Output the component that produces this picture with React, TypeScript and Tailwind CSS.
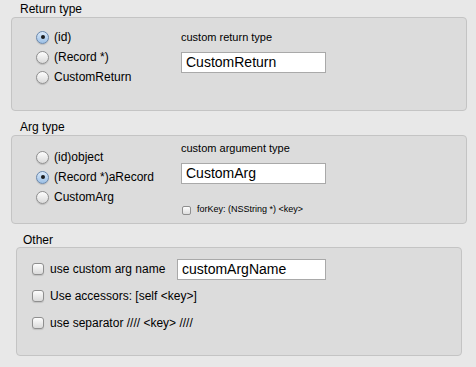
const font = { fontFamily: '"Liberation Sans", Arial, sans-serif' };

function Radio({ checked, label }: { checked?: boolean; label: string }) {
  return (
    <div className="flex items-center h-[20px] gap-[5px]">
      <span
        className={
          checked
            ? "flex items-center justify-center w-[13px] h-[13px] rounded-full border border-[#6a88ad] bg-linear-to-b from-[#dbe9f8] to-[#9cc0e6] shadow-[0_1px_1px_rgba(0,0,0,0.15)]"
            : "flex items-center justify-center w-[13px] h-[13px] rounded-full border border-[#8f8f8f] bg-linear-to-b from-[#fdfdfd] to-[#dadada] shadow-[0_1px_1px_rgba(0,0,0,0.15)]"
        }
      >
        {checked && <span className="w-[4px] h-[4px] rounded-full bg-[#1c1c1c]" />}
      </span>
      <span className="text-[12px] text-black">{label}</span>
    </div>
  );
}

function Check({ small, label }: { small?: boolean; label: string }) {
  return (
    <div className={small ? "flex items-center h-[20px] gap-[6px]" : "flex items-center h-[22px] gap-[6px]"}>
      <span
        className={
          small
            ? "w-[9px] h-[9px] rounded-[2px] border border-[#8f8f8f] bg-linear-to-b from-[#fdfdfd] to-[#dedede]"
            : "w-[12px] h-[12px] rounded-[3px] border border-[#8f8f8f] bg-linear-to-b from-[#fdfdfd] to-[#dadada] shadow-[0_1px_1px_rgba(0,0,0,0.12)]"
        }
      />
      <span className={small ? "text-[9px] text-black" : "text-[12px] text-black"}>{label}</span>
    </div>
  );
}

function Field({ value, w }: { value: string; w: string }) {
  return (
    <div className={`${w} h-[21px] flex items-center px-[4px] bg-white border border-[#a9a9a9] text-[14px] text-black`}>
      {value}
    </div>
  );
}

export default function App() {
  return (
    <div className="flex flex-col w-[476px] h-[367px] bg-[#e8e8e8] overflow-hidden" style={font}>
      {/* Return type */}
      <div className="h-[17px] pl-[20px] pt-[2px] text-[12px] leading-[15px] text-black">Return type</div>
      <div className="flex ml-[11px] w-[456px] h-[94px] rounded-[4px] border border-[#c4c4c4] bg-[#dcdcdc]">
        <div className="flex flex-col w-[169px] pl-[24px] pt-[9px]">
          <Radio checked label="(id)" />
          <Radio label="(Record *)" />
          <Radio label="CustomReturn" />
        </div>
        <div className="flex flex-col gap-[5px] pt-[9px]">
          <div className="h-[20px] flex items-center text-[11px] text-black">custom return type</div>
          <Field value="CustomReturn" w="w-[145px]" />
        </div>
      </div>

      {/* Arg type */}
      <div className="h-[24px] pl-[20px] pt-[9px] text-[12px] leading-[15px] text-black">Arg type</div>
      <div className="flex ml-[11px] w-[456px] h-[89px] rounded-[4px] border border-[#c4c4c4] bg-[#dcdcdc]">
        <div className="flex flex-col w-[169px] pl-[24px] pt-[11px]">
          <Radio label="(id)object" />
          <Radio checked label="(Record *)aRecord" />
          <Radio label="CustomArg" />
        </div>
        <div className="flex flex-col pt-[2px]">
          <div className="h-[20px] flex items-center text-[11px] text-black">custom argument type</div>
          <div className="mt-[5px]">
            <Field value="CustomArg" w="w-[145px]" />
          </div>
          <div className="mt-[16px] pl-[1px]">
            <Check small label="forKey: (NSString *) <key>" />
          </div>
        </div>
      </div>

      {/* Other */}
      <div className="h-[23px] pl-[23px] pt-[9px] text-[12px] leading-[14px] text-black">Other</div>
      <div className="flex flex-col gap-[5px] ml-[16px] w-[446px] h-[109px] pl-[15px] pt-[10px] rounded-[4px] border border-[#c4c4c4] bg-[#dcdcdc]">
        <div className="flex items-center">
          <div className="w-[145px]">
            <Check label="use custom arg name" />
          </div>
          <Field value="customArgName" w="w-[149px]" />
        </div>
        <Check label="Use accessors: [self <key>]" />
        <Check label="use separator //// <key> ////" />
      </div>
    </div>
  );
}
